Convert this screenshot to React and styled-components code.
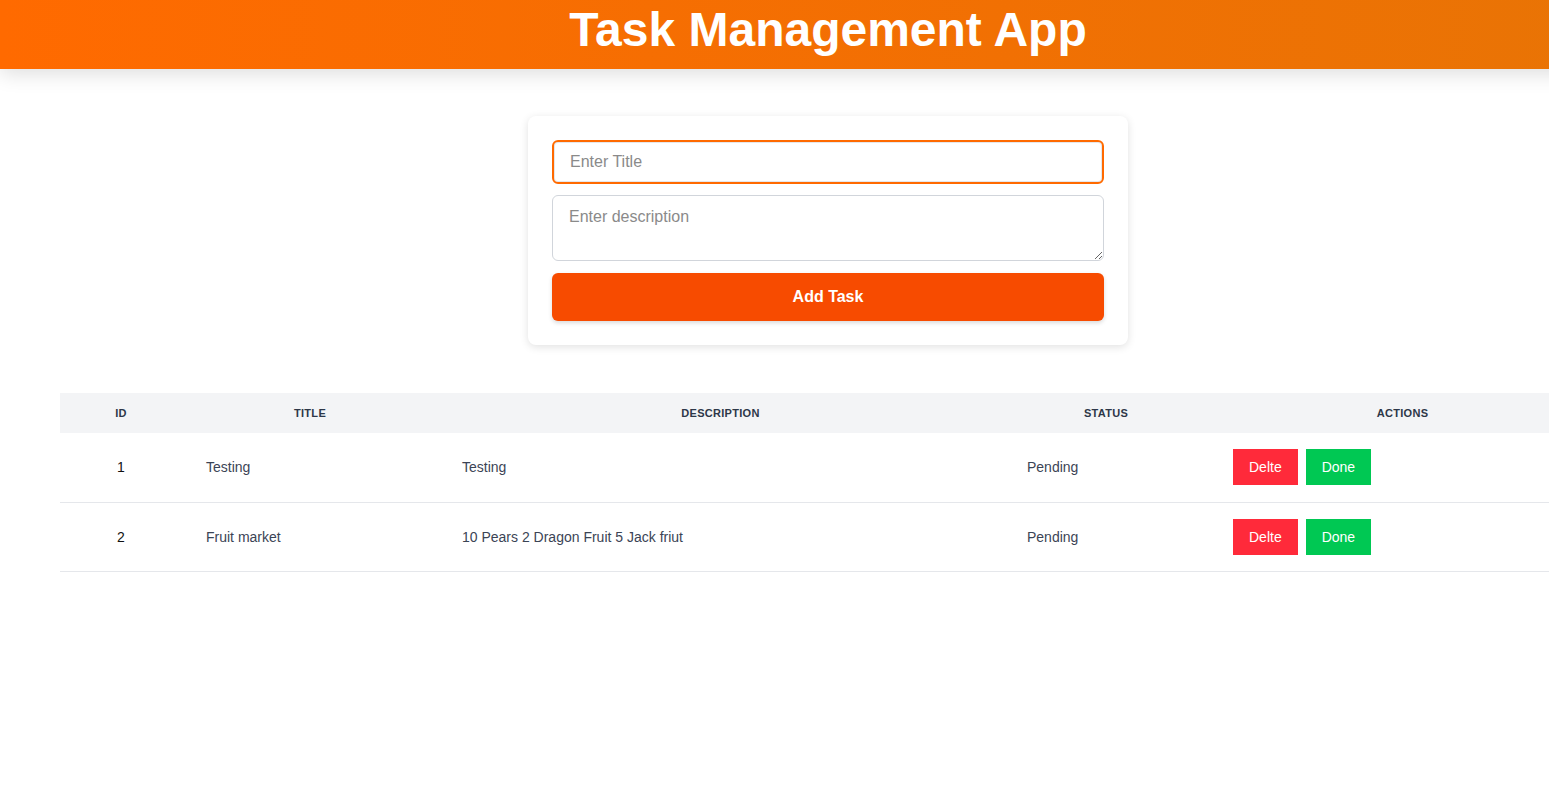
import React, { useState } from "react";
import styled, { createGlobalStyle } from "styled-components";

const GlobalStyle = createGlobalStyle`
  * { box-sizing: border-box; }
  body {
    margin: 0;
    font-family: "Liberation Sans", Arial, sans-serif;
    background: #fff;
  }
`;

const tasks = [
  { id: 1, title: "Testing", description: "Testing", status: "Pending" },
  { id: 2, title: "Fruit market", description: "10 Pears 2 Dragon Fruit 5 Jack friut", status: "Pending" },
];

const App = () => {
  const [title, setTitle] = useState("");
  const [description, setDescription] = useState("");

  return (
    <Page>
      <GlobalStyle />
      <Header>
        <h1>Task Management App</h1>
      </Header>

      <FormCard onSubmit={(e) => e.preventDefault()}>
        <TitleInput
          autoFocus
          placeholder="Enter Title"
          value={title}
          onChange={(e) => setTitle(e.target.value)}
        />
        <DescriptionInput
          placeholder="Enter description"
          value={description}
          onChange={(e) => setDescription(e.target.value)}
        />
        <AddButton type="submit">Add Task</AddButton>
      </FormCard>

      <TaskTable>
        <colgroup>
          <col style={{ width: 122 }} />
          <col style={{ width: 256 }} />
          <col style={{ width: 565 }} />
          <col style={{ width: 206 }} />
          <col style={{ width: 387 }} />
        </colgroup>
        <thead>
          <tr>
            <th>Id</th>
            <th>Title</th>
            <th>Description</th>
            <th>Status</th>
            <th>Actions</th>
          </tr>
        </thead>
        <tbody>
          {tasks.map((task) => (
            <tr key={task.id}>
              <IdCell>{task.id}</IdCell>
              <td>{task.title}</td>
              <td>{task.description}</td>
              <td>{task.status}</td>
              <td>
                <Actions>
                  <ActionButton $variant="delete">Delte</ActionButton>
                  <ActionButton $variant="done">Done</ActionButton>
                </Actions>
              </td>
            </tr>
          ))}
        </tbody>
      </TaskTable>
    </Page>
  );
};

export default App;

const Page = styled.div`
  width: 1656px;
  padding-bottom: 40px;
`;

const Header = styled.header`
  height: 69px;
  background: linear-gradient(90deg, #ff6a00 0%, #e87405 100%);
  box-shadow: 0 4px 20px rgba(0, 0, 0, 0.14);
  display: flex;
  justify-content: center;
  align-items: center;

  h1 {
    margin: 0;
    color: #fff;
    font-size: 48px;
    font-weight: 700;
    line-height: 1;
    padding-bottom: 10px;
  }
`;

const FormCard = styled.form`
  width: 600px;
  margin: 47px auto 48px;
  padding: 24px;
  background: #fff;
  border-radius: 8px;
  box-shadow: 0 2px 8px rgba(0, 0, 0, 0.12);
  display: flex;
  flex-direction: column;
  gap: 12px;
`;

const fieldBase = `
  width: 100%;
  font-family: "Liberation Sans", Arial, sans-serif;
  font-size: 16px;
  color: #333;
  border-radius: 6px;
  padding: 0 16px;
  outline: none;

  &::placeholder {
    color: #8a8a8a;
  }
`;

const TitleInput = styled.input`
  ${fieldBase}
  height: 44px;
  border: 2px solid #ff6a00;
  box-shadow: inset 0 0 0 1px #e5e7eb;
`;

const DescriptionInput = styled.textarea`
  ${fieldBase}
  height: 66px;
  padding-top: 12px;
  border: 1px solid #d1d5db;
  resize: vertical;
  margin-top: -1px;
`;

const AddButton = styled.button`
  height: 48px;
  border: none;
  border-radius: 6px;
  background: #f74b00;
  color: #fff;
  font-family: "Liberation Sans", Arial, sans-serif;
  font-size: 16px;
  font-weight: 700;
  cursor: pointer;
  box-shadow: 0 2px 4px rgba(0, 0, 0, 0.15);
`;

const TaskTable = styled.table`
  width: 1536px;
  margin: 0 60px;
  border-collapse: collapse;
  table-layout: fixed;
  font-size: 14px;
  color: #3b4455;

  th {
    height: 40px;
    background: #f3f4f6;
    font-size: 11px;
    font-weight: 700;
    letter-spacing: 0.3px;
    text-transform: uppercase;
    color: #2d3748;
    text-align: center;
    padding: 0;
  }

  td {
    height: 69px;
    padding: 0 24px;
    text-align: left;
    border-bottom: 1px solid #e5e7eb;
  }
`;

const IdCell = styled.td`
  && {
    text-align: center;
    color: #111;
  }
`;

const Actions = styled.div`
  display: flex;
  gap: 8px;
`;

const ActionButton = styled.button`
  height: 36px;
  padding: 0 16px;
  border: none;
  border-radius: 0;
  font-family: "Liberation Sans", Arial, sans-serif;
  font-size: 14px;
  color: #fff;
  cursor: pointer;
  background: ${({ $variant }) => ($variant === "delete" ? "#ff2a3a" : "#00c853")};
`;
